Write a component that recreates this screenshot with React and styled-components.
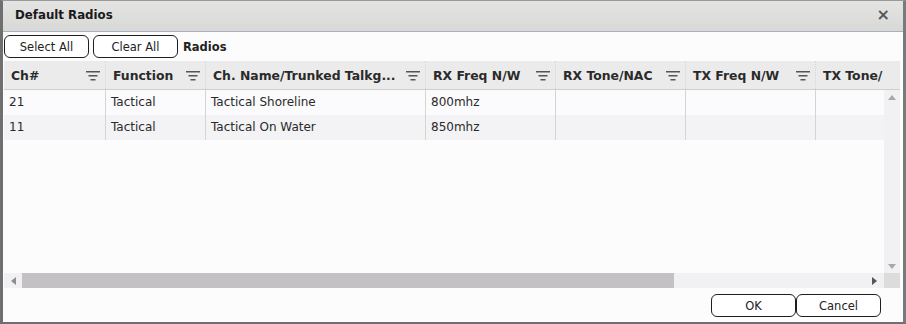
import React from "react";
import styled, { createGlobalStyle } from "styled-components";

const Global = createGlobalStyle`
  html, body { margin: 0; padding: 0; background: #8a7a70; }
  body { width: 906px; height: 324px; overflow: hidden; font-family: "DejaVu Sans", Verdana, sans-serif; }
  * { box-sizing: border-box; }
`;

const Dialog = styled.div`
  width: 906px;
  height: 324px;
  display: flex;
  flex-direction: column;
  background: #fcfcfd;
  border-left: 3px solid #6f6f6f;
  border-right: 3px solid #7a7a7a;
  border-bottom: 2px solid #6f6f6f;
  border-top: 1px solid #9a9a9a;
  font-size: 11px;
  color: #222;
`;

const TitleBar = styled.div`
  height: 31px;
  flex: none;
  display: flex;
  align-items: center;
  justify-content: space-between;
  padding: 0 12px 2px 12px;
  background: linear-gradient(#e4e4e3, #d8d8d7);
  border-bottom: 1px solid #a9b0c2;
  font-weight: bold;
  font-size: 11.8px;
  color: #1a1a1a;
`;

const Close = styled.span`
  font-size: 16px;
  font-weight: bold;
  color: #555;
  line-height: 1;
  margin-right: 1px;
`;

const Toolbar = styled.div`
  display: flex;
  align-items: center;
  gap: 4px;
  padding: 3px 0 3px 1px;
  height: 29px;
  flex: none;
`;

const Btn = styled.button`
  width: 85px;
  height: 23px;
  border: 1px solid #1f1f1f;
  border-radius: 6px;
  background: #fff;
  font-family: "DejaVu Sans", Verdana, sans-serif;
  font-size: 11.5px;
  color: #222;
  padding: 0;
  margin: 0;
`;

const Label = styled.span`
  font-weight: bold;
  font-size: 11.5px;
  margin-left: 1px;
`;

const Grid = styled.div`
  margin: 0 3px 0 1px;
  flex: none;
  display: flex;
  flex-direction: column;
  overflow: hidden;
`;

const HeaderRow = styled.div`
  height: 29px;
  display: flex;
  background: #ebebeb;
  border-bottom: 1px solid #cfcfcf;
  overflow: hidden;
`;

const HeadCell = styled.div`
  width: ${(p) => p.w}px;
  flex: none;
  display: flex;
  align-items: center;
  justify-content: space-between;
  padding: 0 5px 0 7px;
  font-weight: bold;
  font-size: 12.4px;
  color: #2a2a2a;
  border-right: 1px dotted #d6d6d6;
  white-space: nowrap;
  overflow: hidden;
`;

const Body = styled.div`
  display: flex;
  height: 183px;
`;

const Viewport = styled.div`
  width: 880px;
  overflow: hidden;
  background: #fcfcfd;
`;

const Row = styled.div`
  display: flex;
  height: 25px;
  background: ${(p) => (p.alt ? "#f3f2f4" : "#fbfafc")};
`;

const Cell = styled.div`
  width: ${(p) => p.w}px;
  flex: none;
  display: flex;
  align-items: center;
  padding: 0 0 1px 5px;
  border-right: 1px solid #d4d4d4;
  white-space: nowrap;
  overflow: hidden;
  font-size: 12px;
  color: #2a2a2a;
`;

const VScroll = styled.div`
  width: 16px;
  display: flex;
  flex-direction: column;
  justify-content: space-between;
  align-items: center;
  background: #f1f0f2;
  padding: 5px 0 4px;
`;

const HScrollRow = styled.div`
  display: flex;
  height: 15px;
`;

const HTrack = styled.div`
  width: 880px;
  display: flex;
  align-items: center;
  background: #f1f0f2;
`;

const ArrowBox = styled.div`
  width: ${(p) => p.w}px;
  height: 100%;
  flex: none;
  display: flex;
  align-items: center;
  justify-content: center;
`;

const Thumb = styled.div`
  width: 652px;
  height: 100%;
  background: #c3c1c4;
`;

const Spacer = styled.div`
  flex: 1;
`;

const Corner = styled.div`
  width: 16px;
  background: #dcdcdc;
`;

const Footer = styled.div`
  flex: 1;
  display: flex;
  align-items: center;
  justify-content: flex-end;
  padding: 1px 22px 0 0;
  gap: 0;
`;

const FilterIcon = () => (
  <svg width="14" height="11" viewBox="0 0 14 11">
    <rect x="0" y="1" width="14" height="1.5" fill="#555" />
    <rect x="2.5" y="5" width="9" height="1.5" fill="#555" />
    <rect x="4.5" y="9" width="5" height="1.5" fill="#555" />
  </svg>
);

const Tri = ({ dir, color = "#8e8e8e" }) => {
  const pts = {
    up: "0,5 4,0 8,5",
    down: "0,0 8,0 4,5",
    left: "5,0 5,8 0,4",
    right: "0,0 0,8 5,4",
  }[dir];
  const w = dir === "up" || dir === "down" ? 8 : 5;
  const h = dir === "up" || dir === "down" ? 5 : 8;
  return (
    <svg width={w} height={h} viewBox={`0 0 ${w} ${h}`}>
      <polygon points={pts} fill={color} />
    </svg>
  );
};

const cols = [
  { t: "Ch#", w: 102 },
  { t: "Function", w: 100 },
  { t: "Ch. Name/Trunked Talkg...", w: 220 },
  { t: "RX Freq N/W", w: 130 },
  { t: "RX Tone/NAC", w: 130 },
  { t: "TX Freq N/W", w: 130 },
  { t: "TX Tone/", w: 130 },
];

const rows = [
  ["21", "Tactical", "Tactical Shoreline", "800mhz", "", "", ""],
  ["11", "Tactical", "Tactical On Water", "850mhz", "", "", ""],
];

export default function App() {
  return (
    <>
      <Global />
      <Dialog>
        <TitleBar>
          <span>Default Radios</span>
          <Close>×</Close>
        </TitleBar>
        <Toolbar>
          <Btn>Select All</Btn>
          <Btn>Clear All</Btn>
          <Label>Radios</Label>
        </Toolbar>
        <Grid>
          <HeaderRow>
            {cols.map((c, i) => (
              <HeadCell key={i} w={c.w}>
                <span>{c.t}</span>
                {i < 6 && <FilterIcon />}
              </HeadCell>
            ))}
          </HeaderRow>
          <Body>
            <Viewport>
              {rows.map((r, ri) => (
                <Row key={ri} alt={ri % 2 === 1}>
                  {r.map((v, ci) => (
                    <Cell key={ci} w={cols[ci].w}>
                      {v}
                    </Cell>
                  ))}
                </Row>
              ))}
            </Viewport>
            <VScroll>
              <Tri dir="up" color="#a8a8a8" />
              <Tri dir="down" color="#a8a8a8" />
            </VScroll>
          </Body>
          <HScrollRow>
            <HTrack>
              <ArrowBox w={18}>
                <Tri dir="left" />
              </ArrowBox>
              <Thumb />
              <Spacer />
              <ArrowBox w={20}>
                <Tri dir="right" color="#555" />
              </ArrowBox>
            </HTrack>
            <Corner />
          </HScrollRow>
        </Grid>
        <Footer>
          <Btn>OK</Btn>
          <Btn>Cancel</Btn>
        </Footer>
      </Dialog>
    </>
  );
}
